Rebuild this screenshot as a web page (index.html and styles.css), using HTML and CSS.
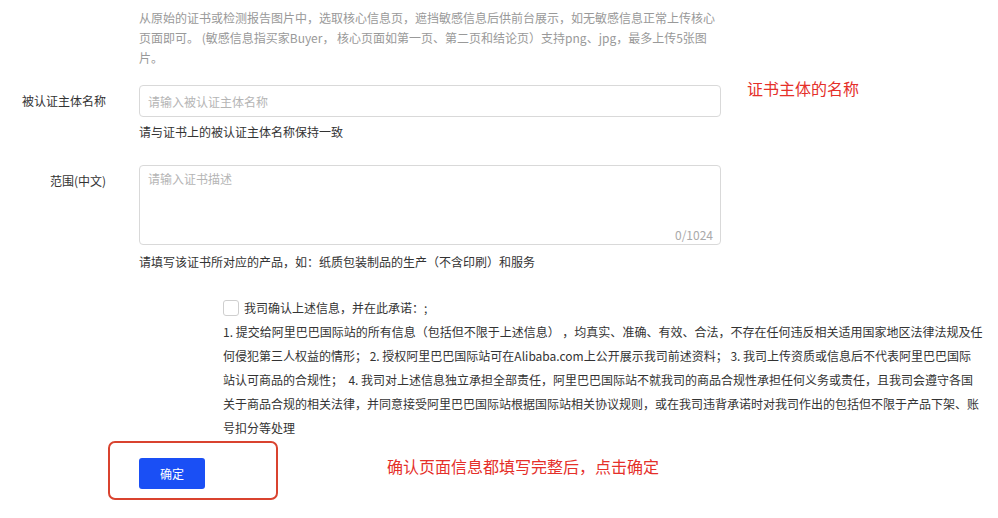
FILE: index.html
```html
<!DOCTYPE html>
<html lang="zh-CN">
<head>
<meta charset="utf-8">
<title>证书信息</title>
<link rel="stylesheet" href="styles.css">
</head>
<body>
<div class="page">
  <div class="row">
    <div></div>
    <p class="desc">从原始的证书或检测报告图片中，选取核心信息页，遮挡敏感信息后供前台展示，如无敏感信息正常上传核心页面即可。 (敏感信息指买家Buyer， 核心页面如第一页、第二页和结论页）支持png、jpg，最多上传5张图片。</p>
  </div>

  <div class="row row-name">
    <label class="label">被认证主体名称</label>
    <div class="field">
      <input class="input" type="text" placeholder="请输入被认证主体名称">
      <p class="help help-name">请与证书上的被认证主体名称保持一致</p>
    </div>
    <div class="note note-name">证书主体的名称</div>
  </div>

  <div class="row row-scope">
    <label class="label">范围(中文)</label>
    <div class="field">
      <div class="textarea-wrap">
        <textarea class="textarea" placeholder="请输入证书描述"></textarea>
        <span class="counter">0/1024</span>
      </div>
      <p class="help help-scope">请填写该证书所对应的产品，如：纸质包装制品的生产（不含印刷）和服务</p>
    </div>
  </div>

  <div class="agree">
    <div class="agree-head">
      <span class="checkbox"></span>
      <span>我司确认上述信息，并在此承诺：;</span>
    </div>
    <p class="agree-text">1. 提交给阿里巴巴国际站的所有信息（包括但不限于上述信息） ，均真实、准确、有效、合法，不存在任何违反相关适用国家地区法律法规及任何侵犯第三人权益的情形； 2. 授权阿里巴巴国际站可在Alibaba.com上公开展示我司前述资料； 3. 我司上传资质或信息后不代表阿里巴巴国际站认可商品的合规性；&nbsp; 4. 我司对上述信息独立承担全部责任，阿里巴巴国际站不就我司的商品合规性承担任何义务或责任，且我司会遵守各国关于商品合规的相关法律，并同意接受阿里巴巴国际站根据国际站相关协议规则，或在我司违背承诺时对我司作出的包括但不限于产品下架、账号扣分等处理</p>
  </div>

  <div class="footer">
    <div class="highlight">
      <button class="btn" type="button">确定</button>
    </div>
    <div class="note note-footer">确认页面信息都填写完整后，点击确定</div>
  </div>
</div>
</body>
</html>
```

FILE: styles.css
```css
* { box-sizing: border-box; }

html, body {
  margin: 0;
  padding: 0;
  background: #ffffff;
}

body {
  font-family: "Noto Sans CJK SC", "Noto Sans", sans-serif;
  font-size: 12px;
  color: #333333;
}

p { margin: 0; }

.page {
  padding-top: 8px;
}

.row {
  display: grid;
  grid-template-columns: 106px 582px auto;
  column-gap: 33px;
  align-items: start;
}

.desc {
  color: #999999;
  line-height: 20px;
}

.row-name { margin-top: 17px; }
.row-scope { margin-top: 23px; }

.label {
  text-align: right;
  line-height: 31px;
  color: #333333;
  white-space: nowrap;
}

.input {
  display: block;
  width: 582px;
  height: 32px;
  border: 1px solid #d9d9d9;
  border-radius: 4px;
  padding: 0 8px;
  font: inherit;
  font-size: 12px;
  color: #333333;
  outline: none;
}

.input::placeholder,
.textarea::placeholder {
  color: #b5b5b5;
}

.help {
  line-height: 20px;
  color: #333333;
}
.help-name { margin-top: 5px; }
.help-scope { margin-top: 7px; }

.textarea-wrap {
  position: relative;
  width: 582px;
  height: 80px;
}

.textarea {
  display: block;
  width: 100%;
  height: 100%;
  border: 1px solid #d9d9d9;
  border-radius: 4px;
  padding: 3px 8px;
  font: inherit;
  font-size: 12px;
  line-height: 20px;
  resize: none;
  outline: none;
}

.counter {
  position: absolute;
  right: 8px;
  bottom: 0px;
  line-height: 20px;
  color: #aaaaaa;
  font-size: 12px;
}

.note {
  color: #e5302a;
  font-size: 16px;
  line-height: 22px;
  white-space: nowrap;
}
.note-name {
  margin-left: -7px;
  margin-top: -8px;
}

.agree {
  margin-left: 223px;
  margin-top: 24px;
  width: 760px;
  line-height: 24px;
  color: #333333;
}

.agree-head {
  display: flex;
  align-items: center;
  gap: 5px;
}

.checkbox {
  display: inline-block;
  width: 16px;
  height: 16px;
  border: 1px solid #cfcfcf;
  border-radius: 3px;
  background: #ffffff;
}

.footer {
  display: flex;
  align-items: flex-start;
  padding-left: 108px;
  margin-top: 1px;
}

.highlight {
  width: 170px;
  height: 59px;
  border: 2px solid #d9432f;
  border-radius: 7px;
  padding: 15px 0 0 29px;
}

.btn {
  display: block;
  width: 66px;
  height: 31px;
  border: none;
  border-radius: 3px;
  background: #1a4ff5;
  color: #ffffff;
  font: inherit;
  font-size: 12px;
  cursor: pointer;
}

.note-footer {
  margin-left: 109px;
  margin-top: 14px;
}
```
